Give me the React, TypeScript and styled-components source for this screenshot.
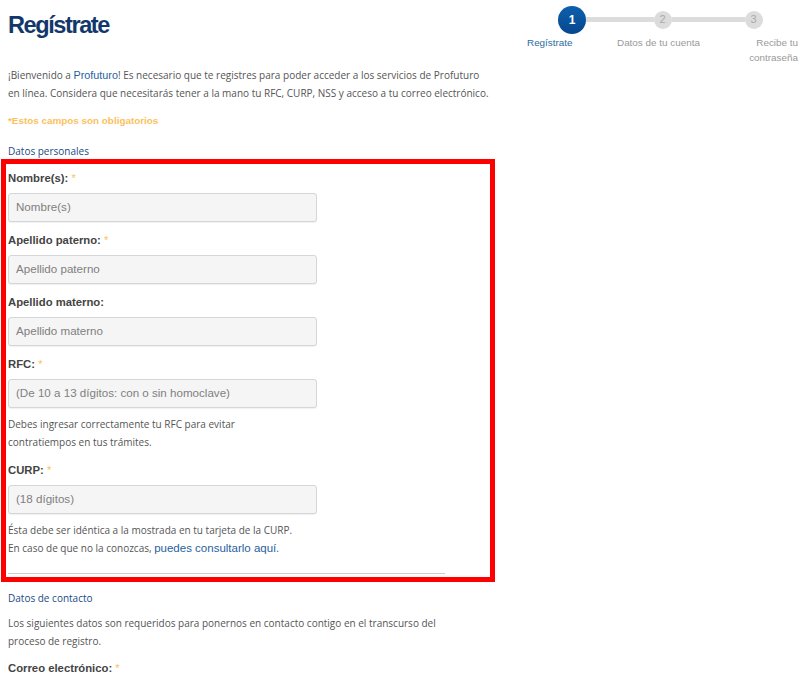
import React from "react";
import styled, { createGlobalStyle } from "styled-components";

const Global = createGlobalStyle`
  html, body { margin: 0; padding: 0; background: #fff; }
  body { font-family: "Open Sans", "Noto Sans", sans-serif; color: #555; overflow: hidden; }
  #root { height: 681px; overflow: hidden; }
`;

const Page = styled.div`
  width: 800px;
  height: 681px;
  overflow: hidden;
`;

const Header = styled.header`
  display: flex;
  justify-content: space-between;
  height: 67px;
`;

const Title = styled.h1`
  margin: 11px 0 0 8px;
  font: bold 23.5px/28px "Liberation Sans", Arial, sans-serif;
  letter-spacing: -1.4px;
  color: #12386b;
`;

const Stepper = styled.div`
  width: 274px;
  margin-top: 5px;
  display: flex;
  flex-direction: column;
`;

const StepTrack = styled.div`
  display: flex;
  align-items: center;
  height: 29px;
  padding-left: 32px;
`;

const StepDot = styled.div<{ $active?: boolean }>`
  flex: none;
  width: ${(p) => (p.$active ? 28 : 18)}px;
  height: ${(p) => (p.$active ? 28 : 18)}px;
  border-radius: 50%;
  background: ${(p) => (p.$active ? "linear-gradient(#0d60ad, #07478f)" : "#dcdcdc")};
  color: ${(p) => (p.$active ? "#fff" : "#aaa")};
  font: ${(p) => (p.$active ? "bold 12px" : "11px")}/1 "Liberation Sans", Arial, sans-serif;
  display: flex;
  align-items: center;
  justify-content: center;
`;

const StepLine = styled.div<{ $w: number }>`
  flex: none;
  width: ${(p) => p.$w}px;
  height: 5px;
  margin-top: -1px;
  background: #dcdcdc;
`;

const StepLabels = styled.div`
  display: flex;
  font: 9.9px/16px "Liberation Sans", Arial, sans-serif;
  margin: 1px 0 0 1px;
`;

const StepLabel = styled.div<{ $active?: boolean; $w: number; $right?: boolean }>`
  flex: none;
  width: ${(p) => p.$w}px;
  color: ${(p) => (p.$active ? "#2c6aa5" : "#999")};
  text-align: ${(p) => (p.$right ? "right" : "left")};
  line-height: ${(p) => (p.$right ? 15 : 16)}px;
`;

const Content = styled.main`
  width: 495px;
`;

const Para = styled.p<{ $mt?: number }>`
  margin: ${(p) => p.$mt ?? 0}px 0 0 8px;
  font-size: 10px;
  line-height: 17.5px;
  color: #555;
  white-space: nowrap;
`;

const Link = styled.a<{ $size: number }>`
  font: ${(p) => p.$size}px/1 "Liberation Sans", Arial, sans-serif;
  color: #1f5f9e;
  text-decoration: none;
`;

const Required = styled.p`
  margin: 10px 0 0 8px;
  font: bold 9.9px/17px "Liberation Sans", Arial, sans-serif;
  color: #fbbf5c;
`;

const SectionTitle = styled.h2<{ $mt: number }>`
  margin: ${(p) => p.$mt}px 0 0 8px;
  font-size: 10px;
  font-weight: 400;
  line-height: 17px;
  color: #1a4a85;
`;

const Marked = styled.section`
  box-sizing: border-box;
  width: 494px;
  height: 423px;
  margin: -1px 0 0 1px;
  border: 5px solid #f00;
  padding: 6px 0 0 2px;
`;

const Label = styled.label`
  display: block;
  font: bold 11.3px/17px "Liberation Sans", Arial, sans-serif;
  color: #444;
`;

const Star = styled.span`
  color: #fbbf5c;
  font-weight: 400;
  font-size: 11px;
`;

const Input = styled.input`
  display: block;
  box-sizing: border-box;
  width: 309px;
  height: 29px;
  margin: 6px 0 10px;
  padding: 0 7px 2px;
  border: 1px solid #d6d6d6;
  border-radius: 3px;
  background: #f5f5f5;
  box-shadow: 0 1px 1px rgba(0, 0, 0, 0.06);
  font: 11.6px "Liberation Sans", Arial, sans-serif;
  outline: none;
  &::placeholder { color: #808080; opacity: 1; }
`;

const Help = styled.p<{ $mb: number }>`
  margin: -2px 0 ${(p) => p.$mb}px;
  font-size: 10px;
  line-height: 17.5px;
  color: #555;
`;

const Divider = styled.hr`
  width: 437px;
  margin: 16px 0 0;
  border: 0;
  border-top: 1px solid #ccc;
`;

const OuterLabel = styled(Label)`
  margin: 10px 0 0 8px;
`;

export default function App() {
  return (
    <Page>
      <Global />
      <Header>
        <Title>Regístrate</Title>
        <Stepper>
          <StepTrack>
            <StepDot $active>1</StepDot>
            <StepLine $w={67.5} />
            <StepDot>2</StepDot>
            <StepLine $w={73} />
            <StepDot>3</StepDot>
          </StepTrack>
          <StepLabels>
            <StepLabel $active $w={90}>Regístrate</StepLabel>
            <StepLabel $w={115}>Datos de tu cuenta</StepLabel>
            <StepLabel $w={66} $right>Recibe tu contraseña</StepLabel>
          </StepLabels>
        </Stepper>
      </Header>
      <Content>
        <Para>
          ¡Bienvenido a <Link href="#" $size={10.8}>Profuturo</Link>! Es necesario que te registres para poder acceder a los servicios de Profuturo
          <br />
          en línea. Considera que necesitarás tener a la mano tu RFC, CURP, NSS y acceso a tu correo electrónico.
        </Para>
        <Required>*Estos campos son obligatorios</Required>
        <SectionTitle $mt={14}>Datos personales</SectionTitle>
        <Marked>
          <div>
            <Label>Nombre(s): <Star>*</Star></Label>
            <Input placeholder="Nombre(s)" />
          </div>
          <div>
            <Label>Apellido paterno: <Star>*</Star></Label>
            <Input placeholder="Apellido paterno" />
          </div>
          <div>
            <Label>Apellido materno:</Label>
            <Input placeholder="Apellido materno" />
          </div>
          <div>
            <Label>RFC: <Star>*</Star></Label>
            <Input placeholder="(De 10 a 13 dígitos: con o sin homoclave)" />
            <Help $mb={11}>
              Debes ingresar correctamente tu RFC para evitar
              <br />
              contratiempos en tus trámites.
            </Help>
          </div>
          <div>
            <Label>CURP: <Star>*</Star></Label>
            <Input placeholder="(18 dígitos)" />
            <Help $mb={0}>
              Ésta debe ser idéntica a la mostrada en tu tarjeta de la CURP.
              <br />
              En caso de que no la conozcas, <Link href="#" $size={11.5}>puedes consultarlo aquí</Link>.
            </Help>
          </div>
          <Divider />
        </Marked>
        <SectionTitle $mt={8}>Datos de contacto</SectionTitle>
        <Para $mt={8}>
          Los siguientes datos son requeridos para ponernos en contacto contigo en el transcurso del
          <br />
          proceso de registro.
        </Para>
        <OuterLabel>Correo electrónico: <Star>*</Star></OuterLabel>
      </Content>
    </Page>
  );
}
